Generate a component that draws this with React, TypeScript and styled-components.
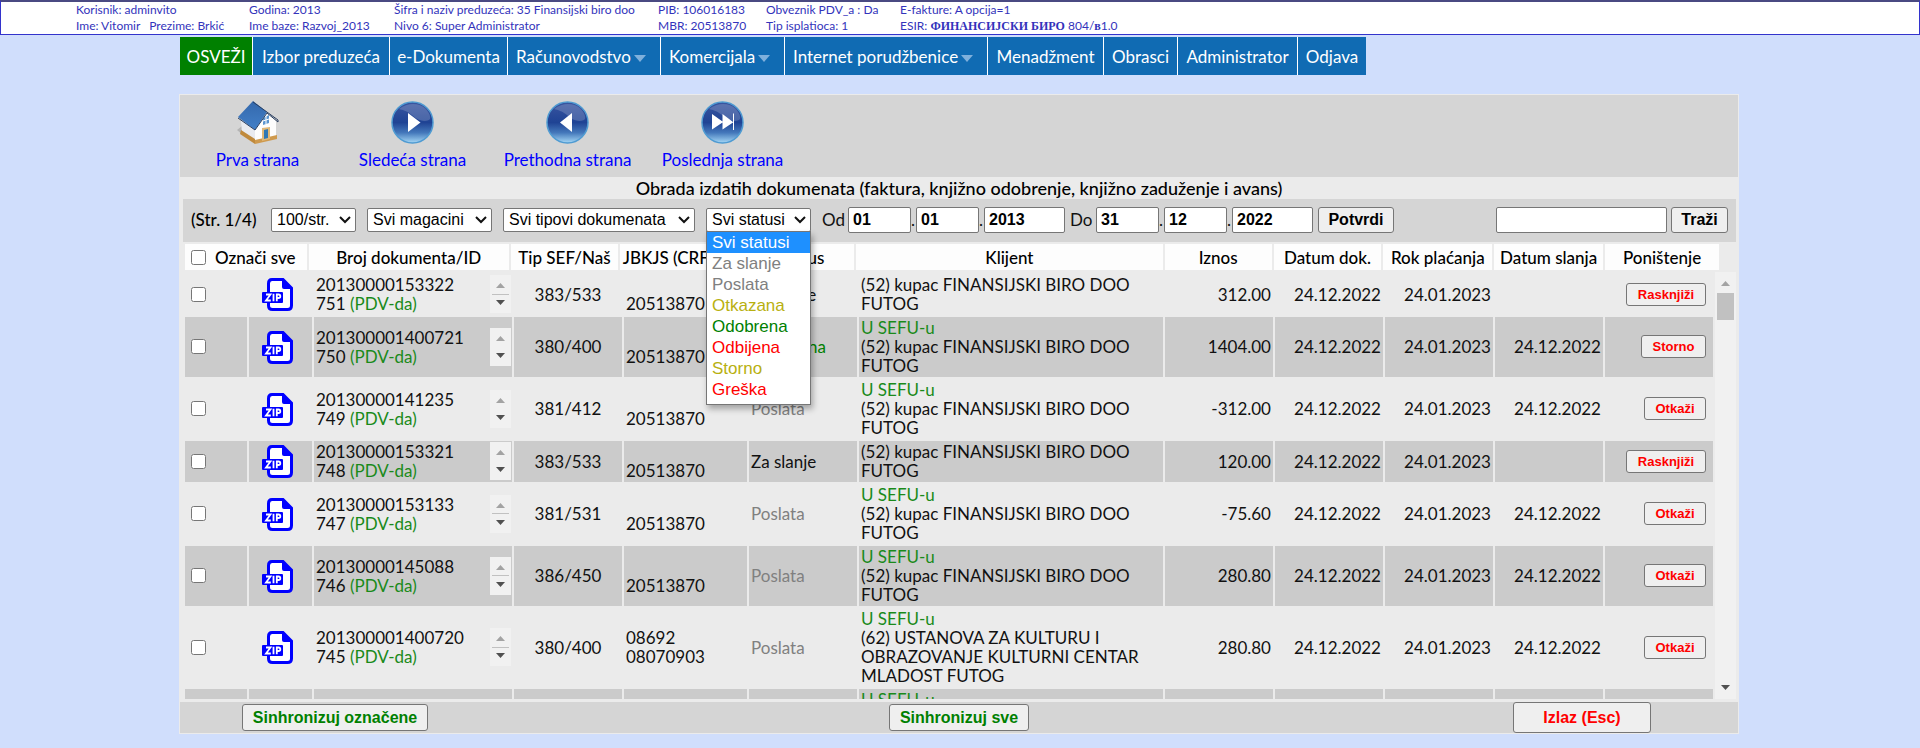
import React from "react";
import styled, { createGlobalStyle } from "styled-components";

const UI = `Lato, "Noto Sans", sans-serif`;
const ARIAL = `"Liberation Sans", Arial, sans-serif`;

const Global = createGlobalStyle`
  * { box-sizing: border-box; }
  body { margin: 0; background: #d0defc; font: 17px/19px ${UI}; color: #111; }
  button, input, select { font-family: ${ARIAL}; color: #000; }
`;

/* ---------- session bar ---------- */
const SessionBar = styled.header`
  display: flex;
  height: 35px;
  padding: 0 0 0 75px;
  background: #fff;
  border: 1px solid #3333cc;
  border-top: 2px solid #4a4a82;
  color: #3333bb;
  font-size: 12px;
  line-height: 16px;
  white-space: nowrap;
`;
const SessionCol = styled.div<{ $w: number }>`
  flex: 0 0 ${(p) => p.$w}px;
`;
const Firm = styled.b`
  font-family: "Liberation Serif", serif;
  font-size: 12px;
  line-height: 12px;
`;

/* ---------- main menu ---------- */
const Menu = styled.nav`
  display: flex;
  margin: 2px 180px 0;
`;
const MenuList = styled.div`
  display: flex;
  gap: 1px;
  background: #fff;
`;
const MenuLink = styled.a<{ $w: number; $active?: boolean; $sub?: boolean }>`
  display: flex;
  align-items: center;
  justify-content: ${(p) => (p.$sub ? "flex-start" : "center")};
  gap: 3px;
  width: ${(p) => p.$w}px;
  height: 38px;
  padding-left: ${(p) => (p.$sub ? 8 : 0)}px;
  background: ${(p) => (p.$active ? "#008000" : "#106bb3")};
  color: #fff;
  font-size: 17px;
  text-decoration: none;
  white-space: nowrap;
  svg { margin-top: 4px; }
`;

/* ---------- panel ---------- */
const Panel = styled.main`
  margin: 19px 181px 15px 179px;
  border: 1px solid #ebebeb;
  background: #ebebeb;
`;
const Pager = styled.div`
  display: flex;
  height: 82px;
  background: #d5d5d5;
`;
const PagerLink = styled.a`
  display: flex;
  flex-direction: column;
  align-items: center;
  gap: 6px;
  width: 155px;
  padding-top: 6px;
  color: #0000ff;
  font-size: 17px;
  text-decoration: none;
`;
const Title = styled.h1`
  margin: 0;
  height: 22px;
  font-size: 18px;
  line-height: 23px;
  font-weight: 500;
  text-align: center;
  color: #000;
`;
const Filters = styled.form`
  display: flex;
  align-items: center;
  height: 43px;
  margin: 0 2px 0 3px;
  padding: 0 8px 2px;
  background: #d5d5d5;
  white-space: nowrap;
`;
const PageInfo = styled.span`
  width: 80px;
  color: #000;
  font-weight: 500;
`;
const SelectBox = styled.div<{ $w: number }>`
  position: relative;
  width: ${(p) => p.$w}px;
  height: 24px;
  margin-right: 11px;
  svg {
    position: absolute;
    top: 8px;
    right: 5px;
    pointer-events: none;
  }
`;
const NativeSelect = styled.select`
  appearance: none;
  width: 100%;
  height: 24px;
  padding: 0 5px;
  background: #fff;
  border: 1px solid #767676;
  border-radius: 2px;
  font-size: 16px;
`;
const StatusMenu = styled.ul`
  position: absolute;
  top: 23px;
  left: 0;
  z-index: 2;
  width: 105px;
  margin: 0;
  padding: 0 0 4px;
  list-style: none;
  background: #fff;
  border: 1px solid #767676;
  box-shadow: 2px 4px 6px rgba(0, 0, 0, 0.3);
  font: 17px/21px ${ARIAL};
`;
const StatusItem = styled.li<{ $color: string; $on?: boolean }>`
  padding-left: 5px;
  color: ${(p) => (p.$on ? "#fff" : p.$color)};
  background: ${(p) => (p.$on ? "#1e90ff" : "transparent")};
`;
const DateLabel = styled.span`
  width: 26px;
`;
const Dot = styled.span`
  width: 5px;
`;
const Field = styled.input<{ $w: number }>`
  width: ${(p) => p.$w}px;
  height: 26px;
  padding: 0 4px;
  background: #fff;
  border: 1px solid #767676;
  border-radius: 2px;
  font-size: 16px;
  font-weight: bold;
`;
const Button = styled.button<{ $w: number; $h?: number; $color?: string; $size?: number }>`
  width: ${(p) => p.$w}px;
  height: ${(p) => p.$h ?? 26}px;
  padding: 0;
  background: #efefef;
  border: 1px solid #767676;
  border-radius: 3px;
  color: ${(p) => p.$color ?? "#000"};
  font-size: ${(p) => p.$size ?? 16}px;
  font-weight: bold;
`;
const Search = styled.div`
  display: flex;
  gap: 4px;
  margin-left: auto;
`;

/* ---------- documents ---------- */
const HeadTable = styled.table`
  width: calc(100% - 20px);
  margin-left: 3px;
  table-layout: fixed;
  border-collapse: separate;
  border-spacing: 2px;
  th {
    height: 26px;
    padding: 0;
    background: #fdfdfd;
    color: #000;
    font-weight: 500;
    white-space: nowrap;
    overflow: hidden;
  }
`;
const CheckAll = styled.label`
  display: flex;
  align-items: center;
  gap: 9px;
  padding-left: 6px;
`;
const Check = styled.input`
  width: 15px;
  height: 15px;
  margin: 0;
`;
const ListArea = styled.div`
  display: flex;
  height: 427px;
  margin: 0 2px 0 3px;
  overflow: hidden;
`;
const DocTable = styled.table`
  flex: 1;
  min-width: 0;
  table-layout: fixed;
  border-collapse: separate;
  border-spacing: 2px;
  td {
    height: 41px;
    padding: 1px 2px 2px;
  }
  tbody tr:nth-child(even) td {
    background: #cbcbcb;
  }
`;
const CheckCell = styled.td`
  && { padding-left: 6px; }
  input { display: block; }
`;
const ZipCell = styled.td`
  && { padding: 0 0 0 13px; }
  svg { display: block; }
`;
const DocInner = styled.div`
  display: flex;
  align-items: center;
  justify-content: space-between;
  margin-right: -1px;
`;
const Spinner = styled.div`
  display: flex;
  flex-direction: column;
  justify-content: space-between;
  align-items: center;
  width: 21px;
  height: 38px;
  padding: 8px 0;
  background: #f1f1f1;
`;
const Thumb = styled.i`
  width: 17px;
  height: 1px;
  background: #c1c1c1;
`;
const CenterCell = styled.td`
  text-align: center;
`;
const NumCell = styled.td`
  text-align: right;
  white-space: nowrap;
`;
const ActionCell = styled.td`
  text-align: right;
  && { padding-right: 7px; }
  button { display: block; margin-left: auto; }
`;
const Tint = styled.span<{ $color: string }>`
  color: ${(p) => p.$color};
`;
const ScrollTrack = styled.div`
  display: flex;
  flex-direction: column;
  align-items: center;
  width: 21px;
  padding: 9px 0 9px;
  background: #f1f1f1;
`;
const ScrollThumb = styled.div`
  width: 17px;
  height: 27px;
  margin: 7px 0 auto;
  background: #c1c1c1;
`;
const Footer = styled.footer`
  display: grid;
  grid-template-columns: 1fr auto 1fr;
  align-items: center;
  height: 31px;
  margin-top: 3px;
  background: #d5d5d5;
  button:first-child { margin-left: 62px; }
  button:nth-child(2) { margin-left: 0; }
  button:last-child { justify-self: end; margin-right: 87px; }
`;

const Tri = ({ up, color, w = 9, h = 5 }: { up?: boolean; color: string; w?: number; h?: number }) => (
  <svg width={w} height={h} viewBox="0 0 10 6" preserveAspectRatio="none" aria-hidden="true">
    <path d={up ? "M0 6L5 0L10 6Z" : "M0 0H10L5 6Z"} fill={color} />
  </svg>
);

const Dropdown = ({ w, label, value, children }: { w: number; label: string; value: string; children?: React.ReactNode }) => (
  <SelectBox $w={w}>
    <NativeSelect aria-label={label}><option>{value}</option></NativeSelect>
    <svg width="12" height="8" viewBox="0 0 12 8" aria-hidden="true">
      <path d="M1 1L6 6L11 1" fill="none" stroke="#111" strokeWidth="2" />
    </svg>
    {children}
  </SelectBox>
);

const HouseIcon = () => (
  <svg width="42" height="43" viewBox="0 0 42 43" aria-hidden="true">
    <defs>
      <linearGradient id="roof" x1="0" y1="0" x2="0" y2="1">
        <stop offset="0" stopColor="#3468ac" />
        <stop offset="1" stopColor="#4280c8" />
      </linearGradient>
    </defs>
    <path d="M0 29L5 25L6 34Z" fill="#b4b4b4" />
    <path d="M4 19L19 27V40L5 33Z" fill="#e9ebf0" />
    <path d="M4 29L18 38V43L3 33Z" fill="#c08a3c" />
    <path d="M18 28L30 11L39 20V37L18 42Z" fill="#fdfdfd" />
    <path d="M18 39L40 34V38L18 43Z" fill="#cf9a4e" />
    <path d="M25 27L33 26V38L25 40Z" fill="#e0b878" />
    <path d="M27 29L31 28V37L27 38Z" fill="#2f78b4" />
    <path d="M26 17L32 14V22L26 24Z" fill="#5b95d0" />
    <path d="M29 15V23M26 20L32 18" stroke="#fff" />
    <path d="M1 16L16 0L30 11L18 29Z" fill="url(#roof)" />
    <path d="M16 1L41 19V21L30 12L18 29L1 17" fill="none" stroke="#2a3f60" strokeWidth="1" />
  </svg>
);

const OrbIcon = ({ kind }: { kind: "next" | "prev" | "last" }) => (
  <svg width="43" height="43" viewBox="0 0 43 43" aria-hidden="true">
    <defs>
      <linearGradient id={`orb-${kind}`} x1="0" y1="0" x2="0" y2="1">
        <stop offset="0" stopColor="#3a55a0" />
        <stop offset="0.5" stopColor="#1f4394" />
        <stop offset="0.75" stopColor="#4478bb" />
        <stop offset="1" stopColor="#a5d8f6" />
      </linearGradient>
    </defs>
    <circle cx="21.500" cy="21.500" r="20.500" fill={`url(#orb-${kind})`} stroke="#4f9bd2" strokeWidth="1.500" />
    <path d="M8 8C17 1 29 2 35 8C40 14 40 18 38 19C33 21 27 20 21 14C16 10 12 9 8 8Z" fill="#fff" opacity="0.180" />
    {kind === "next" && <path d="M17 12L29.500 21.500L17 31Z" fill="#fff" />}
    {kind === "prev" && <path d="M26 12L14 21.500L26 31Z" fill="#fff" />}
    {kind === "last" && <path d="M11 13L21.500 20.500V13L32 21V12.500H33V29H32V21.500L21.500 28.500V21.500L11 28.500Z" fill="#fff" />}
  </svg>
);

const ZipIcon = () => (
  <svg width="31" height="33" viewBox="0 0 31 33" aria-hidden="true">
    <path d="M10 1.500H21L29.500 10V27.500Q29.500 31.500 25.500 31.500H10.500Q6.500 31.500 6.500 27.500V5.500Q6.500 1.500 10 1.500Z" fill="#fff" stroke="#0000ff" strokeWidth="3" />
    <path d="M20 1L30 11H22Q20 11 20 9Z" fill="#0000ff" />
    <rect x="0" y="14" width="21" height="11" rx="1" fill="#0000ff" />
    <path d="M4 16.500H8.500L4 22.500H8.800M11.500 15.800V23.200M14.800 23.200V16.500H16.500Q18.300 16.500 18.300 18.200Q18.300 20 16.500 20H15" fill="none" stroke="#fff" strokeWidth="1.800" />
  </svg>
);

const session: { w: number; lines: [React.ReactNode, React.ReactNode] }[] = [
  { w: 173, lines: ["Korisnik: adminvito", <>Ime: Vitomir &nbsp; Prezime: Brkić</>] },
  { w: 145, lines: ["Godina: 2013", "Ime baze: Razvoj_2013"] },
  { w: 264, lines: ["Šifra i naziv preduzeća: 35 Finansijski biro doo", "Nivo 6: Super Administrator"] },
  { w: 108, lines: ["PIB: 106016183", "MBR: 20513870"] },
  { w: 134, lines: ["Obveznik PDV_a : Da", "Tip isplatioca: 1"] },
  { w: 260, lines: ["E-fakture: A opcija=1", <>ESIR: <Firm>ФИНАНСИЈСКИ БИРО</Firm> 804/<Firm>в</Firm>1.0</>] },
];

const menu: [string, number, boolean?][] = [
  ["OSVEŽI", 72],
  ["Izbor preduzeća", 136],
  ["e-Dokumenta", 117],
  ["Računovodstvo", 152, true],
  ["Komercijala", 123, true],
  ["Internet porudžbenice", 202, true],
  ["Menadžment", 115],
  ["Obrasci", 73],
  ["Administrator", 119],
  ["Odjava", 68],
];

const statuses: [string, string][] = [
  ["Svi statusi", "#000"],
  ["Za slanje", "#808080"],
  ["Poslata", "#808080"],
  ["Otkazana", "#b8b010"],
  ["Odobrena", "#008000"],
  ["Odbijena", "#ff0000"],
  ["Storno", "#b8b010"],
  ["Greška", "#ff0000"],
];

const KUPAC = "(52) kupac FINANSIJSKI BIRO DOO FUTOG";
type Doc = {
  no: string; id: string; tip: string; jbkjs?: string; pib: string; status: string; color: string;
  sef?: boolean; client: string; sum: string; sent?: boolean; action: string; aw: number; thumb?: boolean;
};
const docs: Doc[] = [
  { no: "20130000153322", id: "751", tip: "383/533", pib: "20513870", status: "Za slanje", color: "#111", client: KUPAC, sum: "312.00", action: "Rasknjiži", aw: 80, thumb: true },
  { no: "201300001400721", id: "750", tip: "380/400", pib: "20513870", status: "Odobrena", color: "#008000", sef: true, client: KUPAC, sum: "1404.00", sent: true, action: "Storno", aw: 65 },
  { no: "20130000141235", id: "749", tip: "381/412", pib: "20513870", status: "Poslata", color: "#808080", sef: true, client: KUPAC, sum: "-312.00", sent: true, action: "Otkaži", aw: 62 },
  { no: "20130000153321", id: "748", tip: "383/533", pib: "20513870", status: "Za slanje", color: "#111", client: KUPAC, sum: "120.00", action: "Rasknjiži", aw: 80 },
  { no: "20130000153133", id: "747", tip: "381/531", pib: "20513870", status: "Poslata", color: "#808080", sef: true, client: KUPAC, sum: "-75.60", sent: true, action: "Otkaži", aw: 62, thumb: true },
  { no: "20130000145088", id: "746", tip: "386/450", pib: "20513870", status: "Poslata", color: "#808080", sef: true, client: KUPAC, sum: "280.80", sent: true, action: "Otkaži", aw: 62, thumb: true },
  { no: "201300001400720", id: "745", tip: "380/400", jbkjs: "08692", pib: "08070903", status: "Poslata", color: "#808080", sef: true, client: "(62) USTANOVA ZA KULTURU I OBRAZOVANJE KULTURNI CENTAR MLADOST FUTOG", sum: "280.80", sent: true, action: "Otkaži", aw: 62, thumb: true },
];

const headCols = [122, 200, 108, 126, 106, 307, 107, 108, 109, 109, 114];
const bodyCols = [62, 63, 198, 108, 123, 108, 304, 108, 108, 108, 108, 108];

const Cols = ({ widths }: { widths: number[] }) => {
  const total = widths.reduce((a, b) => a + b, 0);
  return (
    <colgroup>
      {widths.map((w, i) => (
        <col key={i} style={{ width: `${(w / total) * 100}%` }} />
      ))}
    </colgroup>
  );
};

export default function App() {
  return (
    <>
      <Global />
      <SessionBar>
        {session.map((c, i) => (
          <SessionCol key={i} $w={c.w}>
            <div>{c.lines[0]}</div>
            <div>{c.lines[1]}</div>
          </SessionCol>
        ))}
      </SessionBar>
      <Menu>
        <MenuList>
          {menu.map(([label, w, sub], i) => (
            <MenuLink key={label} href="#" $w={w} $active={i === 0} $sub={sub}>
              {label}
              {sub && <Tri color="#7fb0dc" w={12} h={7} />}
            </MenuLink>
          ))}
        </MenuList>
      </Menu>
      <Panel>
        <Pager>
          <PagerLink href="#"><HouseIcon />Prva strana</PagerLink>
          <PagerLink href="#"><OrbIcon kind="next" />Sledeća strana</PagerLink>
          <PagerLink href="#"><OrbIcon kind="prev" />Prethodna strana</PagerLink>
          <PagerLink href="#"><OrbIcon kind="last" />Poslednja strana</PagerLink>
        </Pager>
        <Title>Obrada izdatih dokumenata (faktura, knjižno odobrenje, knjižno zaduženje i avans)</Title>
        <Filters>
          <PageInfo>(Str. 1/4)</PageInfo>
          <Dropdown w={85} label="Broj po strani" value="100/str." />
          <Dropdown w={125} label="Magacin" value="Svi magacini" />
          <Dropdown w={192} label="Tip dokumenta" value="Svi tipovi dokumenata" />
          <Dropdown w={105} label="Status" value="Svi statusi">
            <StatusMenu>
              {statuses.map(([label, color], i) => (
                <StatusItem key={label} $color={color} $on={i === 0}>{label}</StatusItem>
              ))}
            </StatusMenu>
          </Dropdown>
          <DateLabel>Od</DateLabel>
          <Field $w={63} defaultValue="01" aria-label="Od dan" /><Dot>.</Dot>
          <Field $w={63} defaultValue="01" aria-label="Od mesec" /><Dot>.</Dot>
          <Field $w={81} defaultValue="2013" aria-label="Od godina" />
          <Dot />
          <DateLabel>Do</DateLabel>
          <Field $w={63} defaultValue="31" aria-label="Do dan" /><Dot>.</Dot>
          <Field $w={63} defaultValue="12" aria-label="Do mesec" /><Dot>.</Dot>
          <Field $w={81} defaultValue="2022" aria-label="Do godina" />
          <Dot />
          <Button type="button" $w={76}>Potvrdi</Button>
          <Search>
            <Field $w={171} aria-label="Pretraga" />
            <Button type="button" $w={57}>Traži</Button>
          </Search>
        </Filters>
        <HeadTable>
          <Cols widths={headCols} />
          <thead>
            <tr>
              <th><CheckAll><Check type="checkbox" />Označi sve</CheckAll></th>
              <th>Broj dokumenta/ID</th>
              <th>Tip SEF/Naš</th>
              <th>JBKJS (CRF) PIB</th>
              <th>Status</th>
              <th>Klijent</th>
              <th>Iznos</th>
              <th>Datum dok.</th>
              <th>Rok plaćanja</th>
              <th>Datum slanja</th>
              <th>Poništenje</th>
            </tr>
          </thead>
        </HeadTable>
        <ListArea>
          <DocTable>
            <Cols widths={bodyCols} />
            <tbody>
              {docs.map((d) => (
                <tr key={d.id}>
                  <CheckCell><Check type="checkbox" aria-label={`Označi ${d.id}`} /></CheckCell>
                  <ZipCell><ZipIcon /></ZipCell>
                  <td>
                    <DocInner>
                      <div>{d.no}<br />{d.id} <Tint $color="#1a8a1a">(PDV-da)</Tint></div>
                      <Spinner>
                        <Tri up color="#a3a3a3" />
                        {d.thumb && <Thumb />}
                        <Tri color="#505050" />
                      </Spinner>
                    </DocInner>
                  </td>
                  <CenterCell>{d.tip}</CenterCell>
                  <td>{d.jbkjs}<br />{d.pib}</td>
                  <td><Tint $color={d.color}>{d.status}</Tint></td>
                  <td>{d.sef && <><Tint $color="#1a8a1a">U SEFU-u</Tint><br /></>}{d.client}</td>
                  <NumCell>{d.sum}</NumCell>
                  <NumCell>24.12.2022</NumCell>
                  <NumCell>24.01.2023</NumCell>
                  <NumCell>{d.sent && "24.12.2022"}</NumCell>
                  <ActionCell><Button type="button" $w={d.aw} $h={23} $size={13} $color="#ff0000">{d.action}</Button></ActionCell>
                </tr>
              ))}
              <tr>
                <td /><td /><td /><td /><td /><td />
                <td><Tint $color="#1a8a1a">U SEFU-u</Tint><br />{KUPAC}</td>
                <td /><td /><td /><td /><td />
              </tr>
            </tbody>
          </DocTable>
          <ScrollTrack>
            <Tri up color="#a3a3a3" />
            <ScrollThumb />
            <Tri color="#505050" />
          </ScrollTrack>
        </ListArea>
        <Footer>
          <div><Button type="button" $w={186} $h={27} $color="#008000">Sinhronizuj označene</Button></div>
          <Button type="button" $w={140} $h={27} $color="#008000">Sinhronizuj sve</Button>
          <Button type="button" $w={138} $h={31} $color="#ff0000">Izlaz (Esc)</Button>
        </Footer>
      </Panel>
    </>
  );
}
